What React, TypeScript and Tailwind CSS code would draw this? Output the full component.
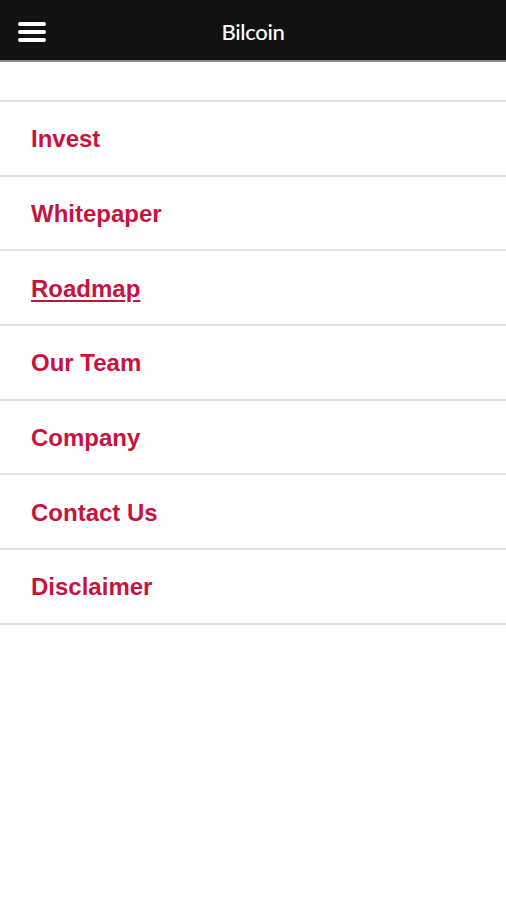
const items = [
  "Invest",
  "Whitepaper",
  "Roadmap",
  "Our Team",
  "Company",
  "Contact Us",
  "Disclaimer",
];

export default function App() {
  return (
    <div className="min-h-[900px] bg-white">
      <header className="relative flex h-[62px] items-center justify-center border-b-2 border-[#8a8a8a] bg-[#121212]">
        <button className="absolute left-[18px] top-[22px] flex flex-col gap-[4px]">
          <span className="block h-[4px] w-[28px] rounded-full bg-white" />
          <span className="block h-[4px] w-[28px] rounded-full bg-white" />
          <span className="block h-[4px] w-[28px] rounded-full bg-white" />
        </button>
        <h1 className="pt-[2px] font-['Lato',sans-serif] text-[22px] font-medium tracking-[-0.3px] text-white">
          Bilcoin
        </h1>
      </header>
      <nav className="pt-[38px]">
        <ul className="border-t-2 border-[#e3e3e3]">
          {items.map((item) => (
            <li
              key={item}
              className="flex h-[74.7px] items-center border-b-2 border-[#e3e3e3] pl-[31px] pt-[2px]"
            >
              <a
                href="#"
                className={`font-['Liberation_Sans',Arial,sans-serif] text-[24px] font-bold text-[#c8133f] ${
                  item === "Roadmap" ? "underline decoration-2 underline-offset-[3px]" : ""
                }`}
              >
                {item}
              </a>
            </li>
          ))}
        </ul>
      </nav>
    </div>
  );
}
